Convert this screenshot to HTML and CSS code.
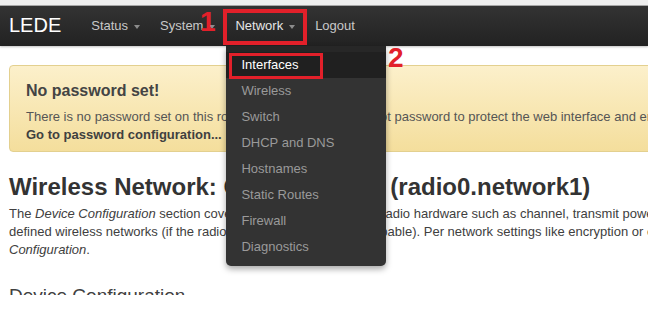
FILE: index.html
```html
<!DOCTYPE html>
<html lang="en">
<head>
  <meta charset="UTF-8" />
  <title>LEDE - Wireless</title>
  <link rel="stylesheet" href="styles.css">
</head>
<body>
  <div class="chrome"></div>
  <header class="navbar">
    <a class="brand" href="#">LEDE</a>
    <ul class="nav">
      <li class="nav-item"><a href="#">Status<span class="caret"></span></a></li>
      <li class="nav-item"><a href="#">System<span class="caret"></span></a></li>
      <li class="nav-item open">
        <a href="#">Network<span class="caret"></span></a>
        <ul class="dropdown">
          <li class="active"><a href="#">Interfaces</a></li>
          <li><a href="#">Wireless</a></li>
          <li><a href="#">Switch</a></li>
          <li><a href="#">DHCP and DNS</a></li>
          <li><a href="#">Hostnames</a></li>
          <li><a href="#">Static Routes</a></li>
          <li><a href="#">Firewall</a></li>
          <li><a href="#">Diagnostics</a></li>
        </ul>
      </li>
      <li class="nav-item"><a href="#">Logout</a></li>
    </ul>
  </header>

  <div class="page">
    <div class="alert">
      <h4>No password set!</h4>
      <p>There is no password set on this router. Please configure a root password to protect the web interface and enable SSH.<br>
      <a href="#">Go to password configuration...</a></p>
    </div>

    <h2 class="title">Wireless Network: Client "LEDE" (radio0.network1)</h2>
    <p class="intro">
      <span>The <em>Device Configuration</em> section covers physical settings of the radio hardware such as channel, transmit power or antenna selection which are shared among all</span>
      <span>defined wireless networks (if the radio hardware is multi-SSID capable). Per network settings like encryption or operation mode are grouped in the <em>Interface</em></span>
      <span><em>Configuration</em>.</span>
    </p>

    <!-- the screenshot is cropped through this heading -->
    <div class="crop">
      <h3 class="section">Device Configuration</h3>
    </div>
  </div>

  <!-- tutorial annotations drawn over the screenshot -->
  <div class="mark box-network"></div>
  <div class="mark box-interfaces"></div>
  <span class="mark num num-1">1</span>
  <span class="mark num num-2">2</span>
</body>
</html>
```

FILE: styles.css
```css
html, body {
  margin: 0;
  height: 100%;
}
body {
  font-family: 'Liberation Sans', Arial, sans-serif;
  font-size: 13px;
  color: #404040;
  background: #fff;
  overflow: hidden;
  position: relative;
}
a {
  text-decoration: none;
}
.chrome {
  height: 5px;
  background: #efefef;
  border-bottom: 1px solid #aaa;
}
.navbar {
  height: 40px;
  display: flex;
  align-items: center;
  background: linear-gradient(#333, #222);
  box-shadow: 0 1px 2px rgba(0,0,0,0.25);
}
.brand {
  color: #fff;
  font-size: 20px;
  line-height: 40px;
  padding: 0 20px 2px 9px;
}
.nav {
  display: flex;
  margin: 0;
  padding: 0;
  list-style: none;
}
.nav-item {
  position: relative;
}
.nav-item > a {
  display: flex;
  align-items: center;
  padding: 0 10px;
  line-height: 40px;
  color: #c8c8c8;
}
.nav-item.open > a {
  color: #e6e6e6;
}
.caret {
  width: 0;
  height: 0;
  margin-left: 6px;
  margin-top: 1px;
  border-left: 3.5px solid transparent;
  border-right: 3.5px solid transparent;
  border-top: 4px solid #8c8c8c;
}
.dropdown {
  position: absolute;
  top: 40px;
  left: 1px;
  width: 160px;
  margin: 0;
  padding: 0 0 6px;
  list-style: none;
  background: #333;
  border-top: 6px solid #272727;
  border-radius: 0 0 5px 5px;
  box-shadow: 0 3px 6px rgba(0,0,0,0.35);
  z-index: 5;
}
.dropdown a {
  display: block;
  padding: 0 15px;
  line-height: 26px;
  color: #9a9a9a;
}
.dropdown .active a {
  background: #202020;
  color: #fff;
}
.page {
  width: 1000px;
  padding-left: 9px;
}
.alert {
  margin-top: 19px;
  padding: 15px 16px 7px;
  background: linear-gradient(#fcf0cb, #f4de9c);
  border: 1px solid #e3d08f;
  border-radius: 4px 0 0 4px;
  color: #555;
}
.alert h4 {
  margin: 0 0 7px;
  font-size: 16px;
  line-height: 20px;
  color: #444;
}
.alert p {
  margin: 0;
  line-height: 18px;
}
.alert a {
  font-weight: bold;
  color: #404040;
}
.title {
  margin: 21px 0 4px;
  font-size: 24px;
  line-height: 28px;
  color: #333;
}
.intro {
  margin: 0;
  line-height: 18px;
}
.intro span {
  display: block;
  white-space: nowrap;
}
.crop {
  margin-top: 25px;
  height: 11px;
  overflow: hidden;
}
.section {
  margin: 0;
  font-size: 19px;
  font-weight: normal;
  line-height: 24px;
  color: #404040;
}

/* red annotation marks */
.mark {
  position: absolute;
  z-index: 10;
}
.box-network {
  left: 223px;
  top: 9px;
  width: 76px;
  height: 28px;
  border: 4px solid #e2202a;
}
.box-interfaces {
  left: 229px;
  top: 53px;
  width: 88px;
  height: 20px;
  border: 3px solid #e2202a;
}
.num {
  color: #e2202a;
  font-weight: bold;
  font-size: 28px;
  line-height: 28px;
}
.num-1 {
  left: 200px;
  top: 8px;
}
.num-2 {
  left: 388px;
  top: 44px;
}
```
